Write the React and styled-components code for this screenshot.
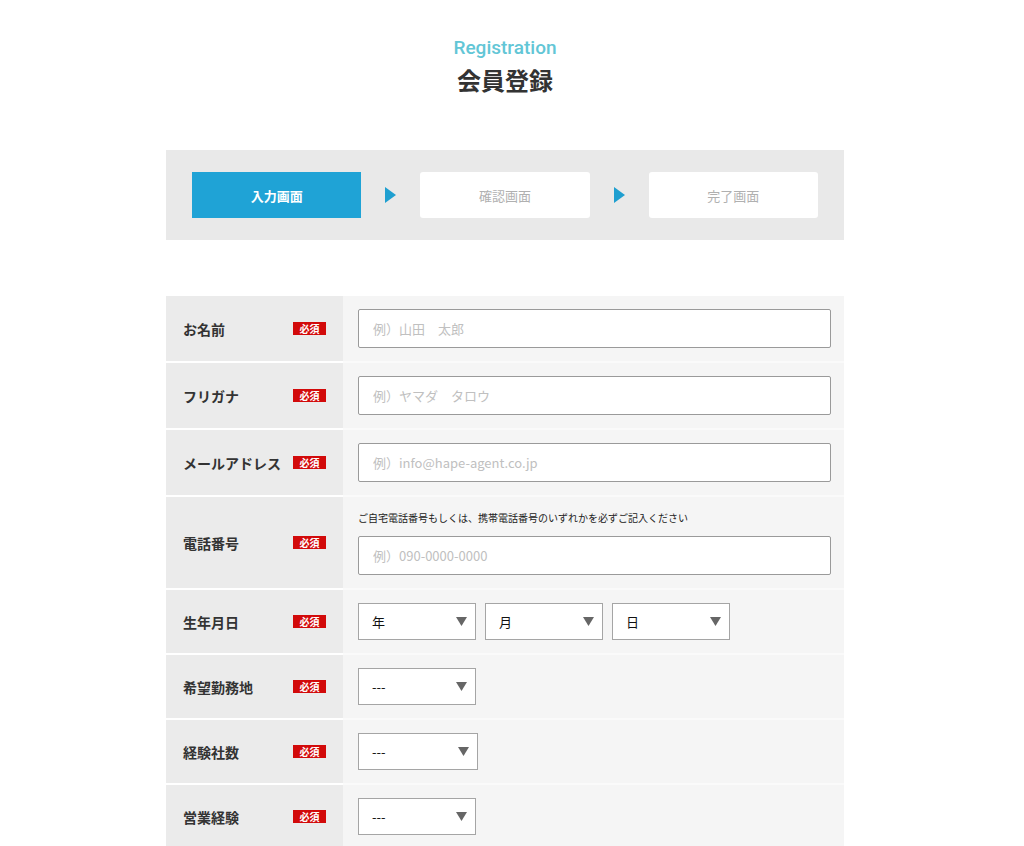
import React from 'react'
import styled, { createGlobalStyle } from 'styled-components'

const GlobalStyle = createGlobalStyle`
	body {
		margin: 0;
		background: #fff;
		font-family: "Noto Sans CJK JP", "Noto Sans", sans-serif;
		color: #333;
	}
`

const Page = styled('div')`
	padding: 0 14px 40px 0;
`

const Container = styled('div')`
	width: 678px;
	margin: 0 auto;
`

const Heading = styled('header')`
	display: flex;
	flex-direction: column;
	align-items: center;
	padding-top: 36px;
	margin-bottom: 54px;
`

const SubTitle = styled('span')`
	font-family: Roboto, "Noto Sans", sans-serif;
	font-weight: 500;
	font-size: 19px;
	line-height: 24px;
	color: #62c6d6;
`

const Title = styled('h1')`
	margin: 4px 0 0 0;
	font-size: 24px;
	line-height: 32px;
	font-weight: 700;
	color: #333;
`

const Steps = styled('div')`
	display: flex;
	align-items: center;
	background: #e9e9e9;
	padding: 22px 26px;
	margin-bottom: 56px;
`

const Step = styled('div')`
	width: 170px;
	height: 46px;
	display: flex;
	align-items: center;
	justify-content: center;
	font-size: 13px;
	border-radius: ${p => (p.active ? '0' : '3px')};
	background: ${p => (p.active ? '#1fa3d6' : '#fff')};
	color: ${p => (p.active ? '#fff' : '#b0b0b0')};
	font-weight: ${p => (p.active ? 700 : 400)};
`

const ArrowCell = styled('div')`
	width: 59px;
	display: flex;
	justify-content: center;
`

const Table = styled('div')`
	display: grid;
	grid-template-columns: 177px 1fr;
`

const LabelCell = styled('div')`
	display: flex;
	align-items: center;
	justify-content: space-between;
	padding: 0 17px;
	background: #ebebeb;
	border-bottom: 2px solid #fff;
	font-size: 14px;
	font-weight: 700;
	color: #333;
`

const Badge = styled('span')`
	width: 33px;
	height: 13px;
	display: inline-flex;
	align-items: center;
	justify-content: center;
	background: #d20a0a;
	color: #fff;
	font-size: 10px;
	font-weight: 700;
	line-height: 1;
`

const FieldCell = styled('div')`
	display: flex;
	flex-direction: column;
	justify-content: center;
	padding: 13px 13px 13px 15px;
	background: #f5f5f5;
	border-bottom: 2px solid #fafafa;
`

const Note = styled('p')`
	margin: 0 0 10px 0;
	font-size: 10px;
	line-height: 16px;
	color: #222;
`

const TextInput = styled('input')`
	box-sizing: border-box;
	width: 100%;
	height: 39px;
	padding: 0 14px;
	border: 1px solid #9a9a9a;
	border-radius: 2px;
	background: #fff;
	font-family: inherit;
	font-size: 13px;
	color: #333;
	outline: none;

	&::placeholder {
		color: #c0c0c0;
	}
`

const SelectRow = styled('div')`
	display: flex;
	gap: 9px;
`

const SelectWrap = styled('div')`
	position: relative;
	width: ${p => p.width || 118}px;
	height: 37px;
`

const Select = styled('select')`
	appearance: none;
	box-sizing: border-box;
	width: 100%;
	height: 100%;
	padding: 0 28px 0 13px;
	border: 1px solid #a5a5a5;
	border-radius: 0;
	background: #fff;
	font-family: inherit;
	font-size: 13px;
	color: #111;
	outline: none;
`

const Caret = styled('svg')`
	position: absolute;
	right: 9px;
	top: 14px;
	pointer-events: none;
`

const Dropdown = ({ value, width }) => (
	<SelectWrap width={width}>
		<Select defaultValue={value}>
			<option>{value}</option>
		</Select>
		<Caret width="11" height="9" viewBox="0 0 11 9">
			<path d="M0 0 L11 0 L5.5 9 Z" fill="#666" />
		</Caret>
	</SelectWrap>
)

const StepArrow = () => (
	<ArrowCell>
		<svg width="11" height="16" viewBox="0 0 11 16">
			<path d="M0 0 L11 8 L0 16 Z" fill="#1f9fd0" />
		</svg>
	</ArrowCell>
)

const Row = ({ label, children }) => (
	<>
		<LabelCell>
			{label}
			<Badge>必須</Badge>
		</LabelCell>
		<FieldCell>{children}</FieldCell>
	</>
)

export default function App() {
	return (
		<Page>
			<GlobalStyle />
			<Container>
				<Heading>
					<SubTitle>Registration</SubTitle>
					<Title>会員登録</Title>
				</Heading>

				<Steps>
					<Step active>入力画面</Step>
					<StepArrow />
					<Step>確認画面</Step>
					<StepArrow />
					<Step>完了画面</Step>
				</Steps>

				<Table>
					<Row label="お名前">
						<TextInput placeholder="例）山田　太郎" />
					</Row>
					<Row label="フリガナ">
						<TextInput placeholder="例）ヤマダ　タロウ" />
					</Row>
					<Row label="メールアドレス">
						<TextInput placeholder="例）info@hape-agent.co.jp" />
					</Row>
					<Row label="電話番号">
						<Note>ご自宅電話番号もしくは、携帯電話番号のいずれかを必ずご記入ください</Note>
						<TextInput placeholder="例）090-0000-0000" />
					</Row>
					<Row label="生年月日">
						<SelectRow>
							<Dropdown value="年" />
							<Dropdown value="月" />
							<Dropdown value="日" />
						</SelectRow>
					</Row>
					<Row label="希望勤務地">
						<SelectRow>
							<Dropdown value="---" />
						</SelectRow>
					</Row>
					<Row label="経験社数">
						<SelectRow>
							<Dropdown value="---" width={120} />
						</SelectRow>
					</Row>
					<Row label="営業経験">
						<SelectRow>
							<Dropdown value="---" />
						</SelectRow>
					</Row>
				</Table>
			</Container>
		</Page>
	)
}
